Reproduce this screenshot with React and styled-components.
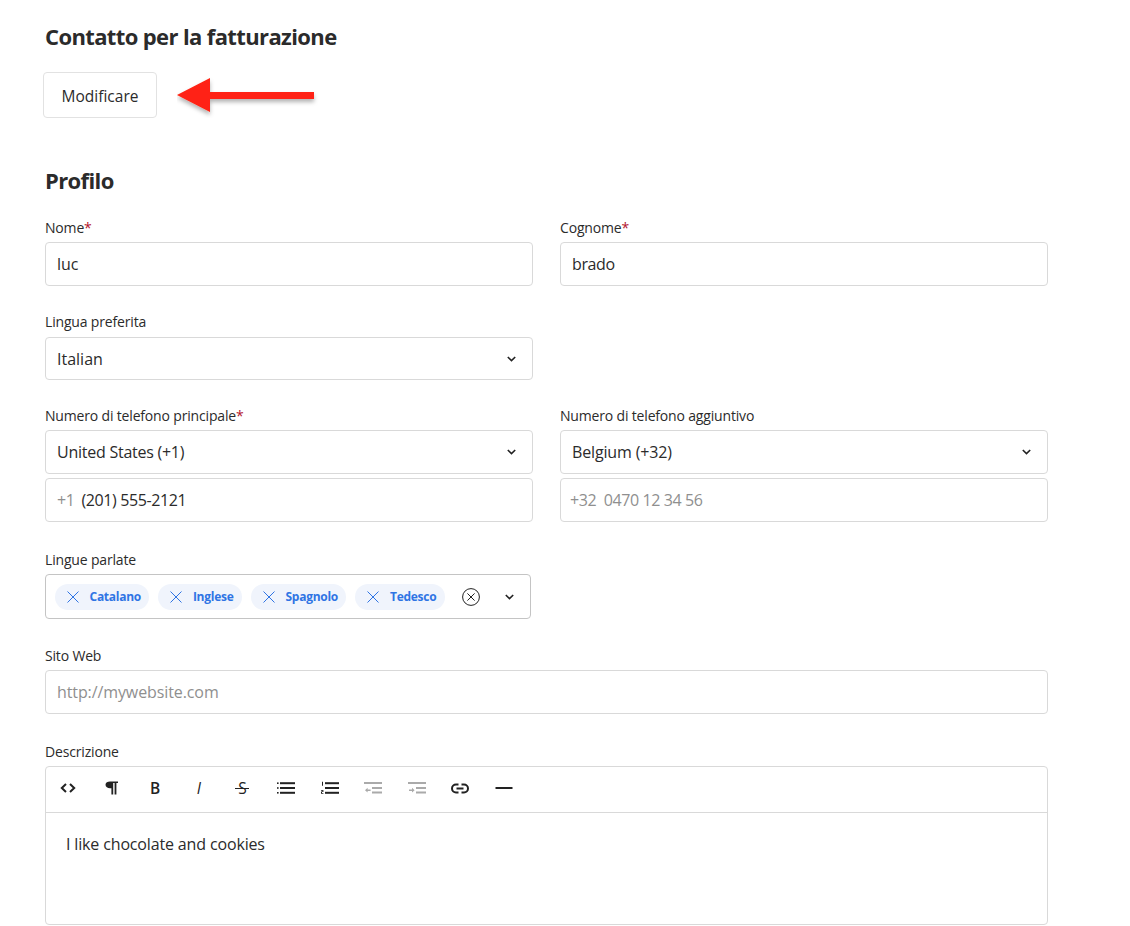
import React from 'react';
import styled, { createGlobalStyle } from 'styled-components';

const GlobalStyle = createGlobalStyle`
  html, body {
    margin: 0;
    padding: 0;
    background: #fff;
  }
  body {
    font-family: "Open Sans", "Noto Sans", "Liberation Sans", sans-serif;
    color: #2b2b2b;
    overflow: hidden;
  }
`;

const Page = styled.div`
  width: 1130px;
  height: 926px;
  padding: 21px 0 0 45px;
  box-sizing: border-box;
  overflow: hidden;
`;

const Heading = styled.h2`
  margin: 0;
  font-size: 22px;
  line-height: 30px;
  font-weight: 700;
  letter-spacing: -0.62px;
  color: #2b2b2b;
`;

const ActionRow = styled.div`
  display: flex;
  align-items: center;
  gap: 20px;
  margin: 21px 0 47px -2px;
`;

const Button = styled.button`
  width: 114px;
  height: 46px;
  background: #fff;
  border: 1px solid #e2e2e2;
  border-radius: 4px;
  font-family: inherit;
  font-size: 15.5px;
  color: #2b2b2b;
  padding: 2px 0 0;
`;

const Form = styled.div`
  width: 1003px;
  margin-top: 23px;
`;

const Row = styled.div`
  display: grid;
  grid-template-columns: 488px 488px;
  column-gap: 27px;
  margin-bottom: ${(p) => p.$after || 26}px;
`;

const Field = styled.div`
  min-width: 0;
  margin-bottom: ${(p) => p.$after || 0}px;
`;

const Label = styled.div`
  font-size: 14px;
  line-height: 20px;
  letter-spacing: -0.17px;
  margin-bottom: ${(p) => p.$gap || 4}px;
  color: #2b2b2b;
`;

const Req = styled.span`
  color: #b3142c;
`;

const Box = styled.div`
  height: ${(p) => p.$h || 44}px;
  box-sizing: border-box;
  border: 1px solid #d9d9d9;
  border-radius: 4px;
  display: flex;
  align-items: center;
  justify-content: space-between;
  padding: 0 16.5px 0 ${(p) => p.$pad || 11}px;
  font-size: 16px;
  letter-spacing: ${(p) => p.$ls ?? -0.25}px;
  margin-top: ${(p) => p.$top || 0}px;
  color: #2b2b2b;
`;

const Muted = styled.span`
  color: #8f8f8f;
  margin-right: 7px;
`;

const Placeholder = styled.span`
  color: #8f8f8f;
`;

const Chevron = () => (
  <svg width="9" height="6" viewBox="0 0 9 6" fill="none">
    <path d="M.8 1 4.500 4.600 8.200 1" stroke="#222" strokeWidth="1.600" />
  </svg>
);

const Select = ({ children, h, ls }) => (
  <Box $h={h} $ls={ls}>
    <span>{children}</span>
    <Chevron />
  </Box>
);

const TagBox = styled.div`
  width: 486px;
  height: 45px;
  box-sizing: border-box;
  border: 1px solid #c4c4c4;
  border-radius: 4px;
  display: flex;
  align-items: center;
  padding: 0 16px 0 9px;
  gap: 9px;
`;

const Tag = styled.div`
  display: flex;
  align-items: center;
  height: 26px;
  gap: 10.5px;
  padding: 0 8.500px 0 12px;
  border-radius: 13px;
  background: #f0f4fc;
  color: #2f74e4;
  font-size: 12px;
  font-weight: 700;
  letter-spacing: -0.27px;
  white-space: nowrap;
`;

const TagEnd = styled.div`
  margin-left: auto;
  display: flex;
  align-items: center;
  gap: 25px;
`;

const Cross = () => (
  <svg width="12" height="12" viewBox="0 0 12 12" fill="none">
    <path d="M.5.5l11 11M11.500.5l-11 11" stroke="#2f74e4" strokeWidth="1" />
  </svg>
);

const ClearIcon = () => (
  <svg width="18" height="18" viewBox="0 0 18 18" fill="none" stroke="#222">
    <circle cx="9" cy="9" r="8.400" />
    <path d="M5.400 5.400l7.200 7.200M12.600 5.400l-7.200 7.200" />
  </svg>
);

const Editor = styled.div`
  height: 159px;
  box-sizing: border-box;
  border: 1px solid #d9d9d9;
  border-radius: 4px;
`;

const Toolbar = styled.div`
  height: 46px;
  box-sizing: border-box;
  display: flex;
  align-items: center;
  padding: 0 0 3px 12px;
  gap: 23.6px;
  border-bottom: 1px solid #d9d9d9;
`;

const Tool = styled.span`
  position: relative;
  width: 20px;
  height: 20px;
  display: flex;
  align-items: center;
  justify-content: center;
  color: #222;
  font-size: 15.5px;
  line-height: 20px;
  font-weight: ${(p) => (p.$bold ? 600 : 400)};
  font-style: ${(p) => (p.$italic ? 'italic' : 'normal')};
`;

const StrikeBar = styled.span`
  position: absolute;
  left: 3px;
  right: 3px;
  top: 10px;
  height: 1px;
  background: #222;
`;

const EditorBody = styled.div`
  padding: 20px 20px;
  font-size: 16px;
  line-height: 22px;
  letter-spacing: -0.15px;
`;

const Arrow = () => (
  <svg width="146" height="46" viewBox="0 0 146 46">
    <defs>
      <filter id="arrowShadow" x="-10%" y="-20%" width="120%" height="150%">
        <feDropShadow dx="0" dy="3" stdDeviation="2" floodColor="#000" floodOpacity="0.3" />
      </filter>
    </defs>
    <path d="M0 23 33 6V20H137V27H33V40Z" fill="#ff2212" filter="url(#arrowShadow)" />
  </svg>
);

const CodeIcon = () => (
  <svg width="18" height="18" viewBox="0 0 18 18" fill="none" stroke="#222" strokeWidth="2">
    <path d="M7 5 2.800 9 7 13M11 5l4.200 4L11 13" />
  </svg>
);

const ParagraphIcon = () => (
  <svg width="18" height="18" viewBox="1 0 18 18">
    <path d="M8 2.500h8v1.600h-1.600V15.500h-1.800V4.100h-1.400V15.500H9.400V9.200H8C5.600 9.200 3.500 8 3.500 5.800S5.600 2.500 8 2.500Z" fill="#222" />
  </svg>
);

const ListIcon = () => (
  <svg width="18" height="14" viewBox="0 0 18 14" fill="#222">
    <rect x="3" y="1.200" width="15" height="2" />
    <rect x="3" y="6" width="15" height="2" />
    <rect x="3" y="10.800" width="15" height="2" />
    <rect x="0" y="1.400" width="1.600" height="1.600" />
    <rect x="0" y="6.200" width="1.600" height="1.600" />
    <rect x="0" y="11" width="1.600" height="1.600" />
  </svg>
);

const OrderedIcon = () => (
  <svg width="18" height="14" viewBox="0 0 18 14" fill="#222">
    <rect x="4" y="1.200" width="14" height="2" />
    <rect x="4" y="6" width="14" height="2" />
    <rect x="4" y="10.800" width="14" height="2" />
    <path d="M1 .8h1v4H1zM0 9h2.400v2H1v1h1.400v.8H0v-2.400h1.400v-.6H0z" />
  </svg>
);

const IndentIcon = ({ flip }) => (
  <svg width="18" height="14" viewBox="0 0 18 14" fill="#aaa">
    <rect x="0" y="1" width="18" height="2" />
    <rect x="8" y="6" width="10" height="2" />
    <rect x="8" y="10.500" width="10" height="2" />
    {flip ? (
      <path d="M1 8.400h3V6.800l2.600 2.400L4 11.600V10H1z" />
    ) : (
      <path d="M6.600 8.400h-3V6.800L1 9.200l2.600 2.400V10h3z" />
    )}
  </svg>
);

const LinkIcon = () => (
  <svg width="18" height="11" viewBox="0 0 18 11" fill="none" stroke="#222" strokeWidth="2">
    <path d="M7.500 1.500H5a4 4 0 0 0 0 8h2.500M10.500 1.500H13a4 4 0 0 1 0 8h-2.500M5.500 5.500h7" />
  </svg>
);

const RuleIcon = () => (
  <svg width="18" height="18" viewBox="0 0 18 18">
    <rect x="0.500" y="8" width="17" height="2" fill="#222" />
  </svg>
);

export default function App() {
  return (
    <>
      <GlobalStyle />
      <Page>
        <Heading>Contatto per la fatturazione</Heading>
        <ActionRow>
          <Button>Modificare</Button>
          <Arrow />
        </ActionRow>
        <Heading>Profilo</Heading>
        <Form>
          <Row>
            <Field>
              <Label>Nome<Req>*</Req></Label>
              <Box $ls={-0.1}>luc</Box>
            </Field>
            <Field>
              <Label>Cognome<Req>*</Req></Label>
              <Box $ls={-0.4}>brado</Box>
            </Field>
          </Row>
          <Row>
            <Field>
              <Label $gap={5}>Lingua preferita</Label>
              <Select h={43} ls={0}>Italian</Select>
            </Field>
          </Row>
          <Row $after={28}>
            <Field>
              <Label>Numero di telefono principale<Req>*</Req></Label>
              <Select>United States (+1)</Select>
              <Box $top={4} $ls={-0.4}><span><Muted>+1</Muted>(201) 555-2121</span></Box>
            </Field>
            <Field>
              <Label>Numero di telefono aggiuntivo</Label>
              <Select ls={-0.15}>Belgium (+32)</Select>
              <Box $top={4} $ls={-0.4} $pad={9}><Placeholder>+32&nbsp; 0470 12 34 56</Placeholder></Box>
            </Field>
          </Row>
          <Row $after={27}>
            <Field>
              <Label>Lingue parlate</Label>
              <TagBox>
                {['Catalano', 'Inglese', 'Spagnolo', 'Tedesco'].map((t) => (
                  <Tag key={t}><Cross />{t}</Tag>
                ))}
                <TagEnd><ClearIcon /><Chevron /></TagEnd>
              </TagBox>
            </Field>
          </Row>
          <Field $after={28}>
            <Label>Sito Web</Label>
            <Box $ls={-0.1}><Placeholder>http://mywebsite.com</Placeholder></Box>
          </Field>
          <Field>
            <Label>Descrizione</Label>
            <Editor>
              <Toolbar>
                <Tool><CodeIcon /></Tool>
                <Tool><ParagraphIcon /></Tool>
                <Tool $bold>B</Tool>
                <Tool $italic>I</Tool>
                <Tool>S<StrikeBar /></Tool>
                <Tool><ListIcon /></Tool>
                <Tool><OrderedIcon /></Tool>
                <Tool><IndentIcon /></Tool>
                <Tool><IndentIcon flip /></Tool>
                <Tool><LinkIcon /></Tool>
                <Tool><RuleIcon /></Tool>
              </Toolbar>
              <EditorBody>I like chocolate and cookies</EditorBody>
            </Editor>
          </Field>
        </Form>
      </Page>
    </>
  );
}
